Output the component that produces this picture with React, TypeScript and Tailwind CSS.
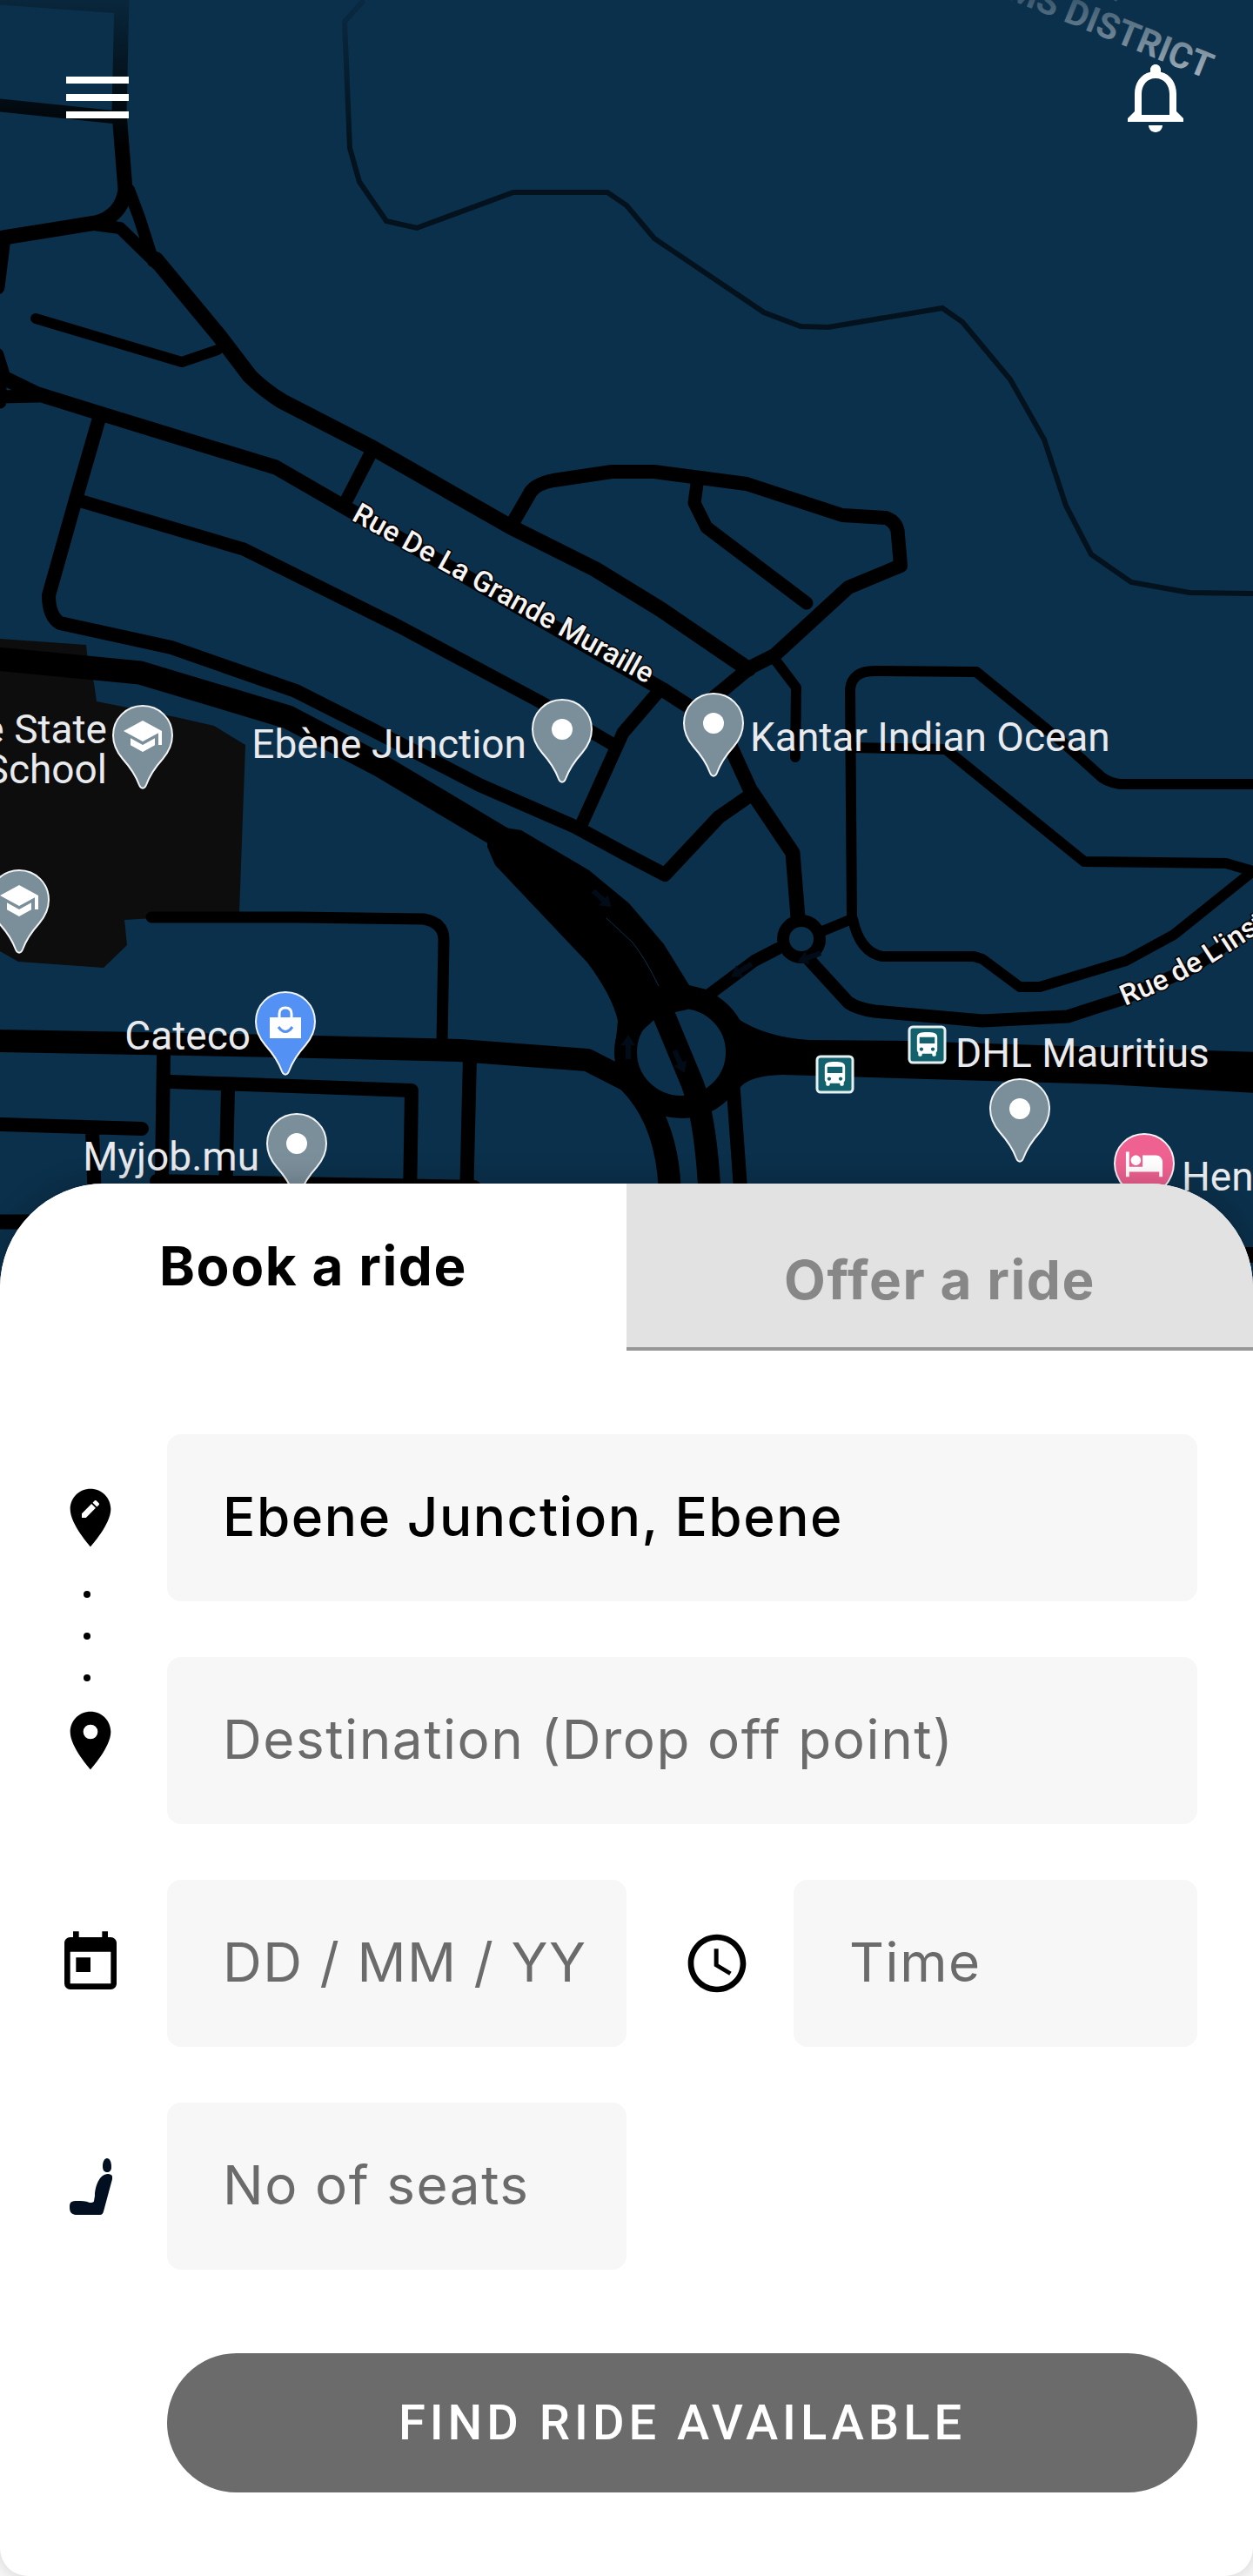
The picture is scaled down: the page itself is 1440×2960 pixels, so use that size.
import React, { useState } from 'react';
import {
  MdAccessTime,
  MdDirectionsBus,
  MdEditLocation,
  MdHotel,
  MdMenu,
  MdNotificationsNone,
  MdPlace,
  MdSchool,
  MdToday,
} from 'react-icons/md';

type Tab = 'book' | 'offer';

interface PinProps {
  x: number;
  y: number;
  color?: string;
  children?: React.ReactNode;
}

interface FieldProps {
  id: string;
  label: string;
  value: string;
  placeholder?: string;
  onChange: (value: string) => void;
}

const roads = [
  { width: 15, d: 'M0 -2L138 8M0 121L135 135' },
  { width: 17, d: 'M140 -5L137 130L144 218Q140 248 110 256L4 273L-3 330' },
  { width: 14, d: 'M148 218L160 250L176 300M108 258L138 262L180 303' },
  { width: 18, d: 'M179 298L252 386L287 432Q303 448 324 461L427 514L588 606L684 654L759 700L860 769' },
  { width: 12, d: 'M41 366L209 416L250 402' },
  { width: 17, d: 'M-4 408L4 434L41 452L115 475L317 537L400 585L761 792L820 830L836 850L862 907L911 980L917 1054' },
  { width: 15, d: 'M0 425V462M0 456L44 455' },
  { width: 16, d: 'M115 477L87 574L56 684Q56 708 69 716L197 744L340 794L427 838L551 902L661 950L720 982L764 1005L826 939L862 914' },
  { width: 15, d: 'M87 574L280 631L459 720L620 806L702 854' },
  { width: 15, d: 'M427 519L395 581M668 948L716 842L759 792' },
  { width: 16, d: 'M588 603L610 565Q616 556 636 552L703 542H752L858 556L968 592L1018 595Q1032 600 1032 615L1035 650L975 675L890 753L862 767L815 806' },
  { width: 15, d: 'M801 556L798 578L812 606L927 693' },
  { width: 12, d: 'M890 757L915 790L914 870' },
  { width: 12, d: 'M945 1070L979 1056' },
  { width: 14, d: 'M894 1090L867 1104L808 1148' },
  { width: 15, d: 'M931 1104L975 1152Q985 1159 1005 1162L1129 1173L1227 1168L1289 1148L1370 1112L1445 1060' },
  { width: 12, d: 'M979 1056L977 792Q979 771 1005 771L1122 772L1225 856L1266 893Q1276 900 1287 901H1445' },
  { width: 12, d: 'M979 859L1087 861L1246 990L1409 992L1440 1001L1349 1074L1294 1104L1195 1134H1172L1129 1102L1119 1099H1014Q988 1094 980 1056' },
  { width: 13, d: 'M174 1054H340L487 1056Q510 1060 510 1080L508 1196' },
  { width: 27, d: 'M-4 757L161 773L331 824L436 879L580 965' },
  { width: 26, d: 'M-4 1196L320 1202L528 1207L675 1218L722 1242' },
  { width: 16, d: 'M188 1214L185 1420M197 1243L473 1253L471 1380M262 1250L259 1380M540 1214L536 1380M0 1292L163 1297M106 1300L109 1380M180 1357L545 1364' },
  { width: 17, d: 'M-5 1404H40' },
  { width: 26, d: 'M722 1242Q770 1290 770 1380M752 1140L796 1246Q812 1290 816 1380' },
  { width: 16, d: 'M842 1240L852 1380' },
  { width: 18, d: 'M1420 1442H1445' },
];

// one-way markers: position and heading in degrees
const arrows = [
  { x: 692, y: 1033, angle: 42 },
  { x: 722, y: 1203, angle: -90 },
  { x: 781, y: 1220, angle: 66 },
  { x: 852, y: 1115, angle: 148 },
  { x: 930, y: 1100, angle: 160 },
];

function Pin({ x, y, color = '#7b8f9b', children }: PinProps) {
  return (
    <g transform={`translate(${x} ${y})`}>
      <path
        d="M0 -34C-19 -34 -34 -19 -34 0C-34 12 -29 20 -23 27C-14 37 -8 46 -4 57C-2 62 2 62 4 57C8 46 14 37 23 27C29 20 34 12 34 0C34 -19 19 -34 0 -34Z"
        fill={color}
        stroke="#f1f3f4"
        strokeWidth={2}
      />
      {children ?? <circle r={12} fill="#fff" />}
    </g>
  );
}

function BusStop({ x, y }: { x: number; y: number }) {
  return (
    <g transform={`translate(${x} ${y})`}>
      <rect x={1} y={1} width={41} height={41} rx={4} fill="#14616e" stroke="#e6f0f0" strokeWidth={3} />
      <MdDirectionsBus x={4} y={4} size={35} color="#fff" />
    </g>
  );
}

function RideMap() {
  return (
    <svg
      className="absolute inset-x-0 top-0 h-[1500px] w-full font-[Roboto,sans-serif]"
      viewBox="0 0 1440 1500"
      preserveAspectRatio="xMidYMin slice"
      role="img"
      aria-label="Map of Ebène"
    >
      <defs>
        <linearGradient id="map-fade" x1="0" y1="0" x2="0" y2="1">
          <stop offset="0" stopColor="#0b304b" stopOpacity={0.8} />
          <stop offset="1" stopColor="#0b304b" stopOpacity={0} />
        </linearGradient>
        <path id="rue-institut" d="M1293 1156L1344 1134L1390 1109L1480 1050" />
      </defs>

      <rect width={1440} height={1500} fill="#0b304b" />
      <path
        d="M0 734L99 741L101 760L108 785L111 806L202 824L246 834L282 856L275 1049L143 1057L146 1086L119 1112L21 1105L0 1093Z"
        fill="#0d0d0d"
      />
      <path
        d="M418 0L396 25L402 170L413 209L444 254L479 262L590 221H698L720 236L752 274L878 359L920 375L952 376L1083 354L1106 370L1161 436L1200 505L1225 581L1254 637L1300 669L1367 681L1445 682"
        fill="none"
        stroke="#03121c"
        strokeWidth={6}
      />

      <g fill="none" stroke="#000" strokeLinecap="round" strokeLinejoin="round">
        {roads.map(road => (
          <path key={road.d} d={road.d} strokeWidth={road.width} />
        ))}
        <circle cx={921} cy={1079} r={21} strokeWidth={14} />
        <ellipse cx={783} cy={1209} rx={64} ry={63} strokeWidth={26} />
      </g>
      <path d="M560 948L599 954L677 1000L723 1038L763 1085L792 1132L812 1137L790 1160L757 1167L732 1190L706 1214L710 1173Q704 1145 675 1106L569 994L560 973Z" />
      <path d="M812 1137L847 1170Q880 1192 930 1195L1041 1196L1445 1209V1256L1271 1246L899 1235Q862 1236 851 1249L815 1279L838 1209Z" />
      <path d="M697 1055L727 1083Q742 1102 757 1133" fill="none" stroke="#0b304b" strokeWidth={1} />
      {arrows.map(arrow => (
        <path
          key={arrow.x}
          transform={`translate(${arrow.x} ${arrow.y}) rotate(${arrow.angle})`}
          d="M-14 -3H2V-8L14 0L2 8V3H-14Z"
          fill="#020c18"
        />
      ))}

      <g fontSize={33} fontWeight={500} fill="#f5f5f5" stroke="#000" strokeWidth={3} paintOrder="stroke">
        <text transform="translate(403 597) rotate(29)">Rue De La Grande Muraille</text>
        <text>
          <textPath href="#rue-institut">Rue de L'inst</textPath>
        </text>
      </g>
      <g fontSize={41} fontWeight={700} fill="#fff" textAnchor="end">
        <text transform="translate(1387 91) rotate(22)">WILHEMS DISTRICT</text>
        <text transform="translate(1292 5) rotate(22)">Y</text>
      </g>

      <g fontSize={46} fill="#e8eaed">
        <text x={123} y={854} textAnchor="end">Ebène State</text>
        <text x={123} y={900} textAnchor="end">School</text>
        <text x={605} y={871} textAnchor="end">Ebène Junction</text>
        <text x={862} y={863}>Kantar Indian Ocean</text>
        <text x={288} y={1206} textAnchor="end">Cateco</text>
        <text x={298} y={1345} textAnchor="end">Myjob.mu</text>
        <text x={1098} y={1226}>DHL Mauritius</text>
        <text x={1358} y={1368}>Henn</text>
      </g>

      <Pin x={164} y={845}>
        <MdSchool x={-24} y={-23} size={48} color="#fff" />
      </Pin>
      <Pin x={22} y={1034}>
        <MdSchool x={-24} y={-23} size={48} color="#fff" />
      </Pin>
      <Pin x={646} y={838} />
      <Pin x={820} y={831} />
      <Pin x={341} y={1314} />
      <Pin x={1172} y={1274} />
      <Pin x={328} y={1174} color="#5491f5">
        <path d="M-18 -5H18V19H-18Z" fill="#fff" />
        <path d="M-7 -4V-9Q-7 -16 0 -16Q7 -16 7 -9V-4" fill="none" stroke="#fff" strokeWidth={3} />
        <path d="M-8 6Q0 17 8 6" fill="none" stroke="#5491f5" strokeWidth={3} />
      </Pin>
      <Pin x={1315} y={1337} color="#ee6191">
        <MdHotel x={-23} y={-23} size={46} color="#fff" />
      </Pin>
      <BusStop x={938} y={1213} />
      <BusStop x={1044} y={1179} />

      <rect width={1440} height={170} fill="url(#map-fade)" />
    </svg>
  );
}

function SeatIcon() {
  return (
    <svg className="size-20" viewBox="0 0 80 80" fill="#010f20" aria-hidden="true">
      <path d="M59 8C56 8 54 12 54 17C54 22 56 24 59 24C62 24 64 22 64 18C64 12 62 8 59 8Z" />
      <path d="M65 29C65 27 62 26 60 26C50 26 45 41 45 51L44 57Q44 59 39 59C34 57 30 57 25 57C18 57 16 58 16 64C16 70 18 73 25 73H51Q54 73 55 69L65 32Z" />
    </svg>
  );
}

function Field({ id, label, value, placeholder, onChange }: FieldProps) {
  return (
    <input
      id={id}
      aria-label={label}
      value={value}
      placeholder={placeholder}
      onChange={event => onChange(event.target.value)}
      className="h-48 w-full min-w-0 rounded-2xl bg-[#f7f7f7] pr-4 pb-1 pl-16 text-[62px] font-medium tracking-wide text-black outline-none placeholder:font-normal placeholder:text-[#6b6b6b]"
    />
  );
}

export default function App() {
  const [tab, setTab] = useState<Tab>('book');
  const [pickup, setPickup] = useState('Ebene Junction, Ebene');
  const [destination, setDestination] = useState('');
  const [date, setDate] = useState('');
  const [time, setTime] = useState('');
  const [seats, setSeats] = useState('');

  const tabClass = (name: Tab) =>
    tab === name
      ? 'bg-white pb-1 text-black'
      : 'border-b-4 border-[#979797] bg-[#e2e2e2] pt-8 text-[#878787]';

  return (
    <main className="relative overflow-hidden bg-white font-[Inter,sans-serif]">
      <RideMap />

      <header className="relative flex h-[1360px] items-start justify-between p-16 text-white">
        <button type="button" aria-label="Menu">
          <MdMenu className="size-24" />
        </button>
        <button type="button" aria-label="Notifications">
          <MdNotificationsNone className="size-24" />
        </button>
      </header>

      <section className="relative overflow-hidden rounded-t-[120px] rounded-b-[32px] bg-white shadow-[0_0_32px_rgba(0,0,0,0.25)]">
        <div role="tablist" className="grid h-48 grid-cols-2 text-[62px] font-bold tracking-wide">
          <button type="button" role="tab" aria-selected={tab === 'book'} onClick={() => setTab('book')} className={tabClass('book')}>
            Book a ride
          </button>
          <button type="button" role="tab" aria-selected={tab === 'offer'} onClick={() => setTab('offer')} className={tabClass('offer')}>
            Offer a ride
          </button>
        </div>

        <form className="flex flex-col gap-16 px-16 py-24" onSubmit={event => event.preventDefault()}>
          <div className="flex gap-12">
            <div className="flex flex-col items-center justify-between py-14">
              <label htmlFor="pickup">
                <MdEditLocation className="size-20" />
              </label>
              <div className="mr-2 flex flex-col gap-10 pt-4">
                <span className="size-2 rounded-full bg-black" />
                <span className="size-2 rounded-full bg-black" />
                <span className="size-2 rounded-full bg-black" />
              </div>
              <label htmlFor="destination">
                <MdPlace className="size-20" />
              </label>
            </div>
            <div className="flex min-w-0 flex-1 flex-col gap-16">
              <Field id="pickup" label="Pick up point" value={pickup} onChange={setPickup} />
              <Field
                id="destination"
                label="Destination"
                placeholder="Destination (Drop off point)"
                value={destination}
                onChange={setDestination}
              />
            </div>
          </div>

          <div className="grid grid-cols-2 gap-y-16">
            <div className="flex items-center gap-12">
              <label htmlFor="date">
                <MdToday className="size-20" />
              </label>
              <Field id="date" label="Date" placeholder="DD / MM / YY" value={date} onChange={setDate} />
            </div>
            <div className="flex items-center gap-12 pl-16">
              <label htmlFor="time">
                <MdAccessTime className="size-20" />
              </label>
              <Field id="time" label="Time" placeholder="Time" value={time} onChange={setTime} />
            </div>
            <div className="flex items-center gap-12">
              <label htmlFor="seats">
                <SeatIcon />
              </label>
              <Field id="seats" label="Number of seats" placeholder="No of seats" value={seats} onChange={setSeats} />
            </div>
          </div>

          <button
            type="submit"
            className="mt-8 ml-32 h-40 rounded-full bg-[#6b6b6b] font-[Roboto,sans-serif] text-[56px] font-medium tracking-[5px] text-white"
          >
            FIND RIDE AVAILABLE
          </button>
        </form>
      </section>
    </main>
  );
}
